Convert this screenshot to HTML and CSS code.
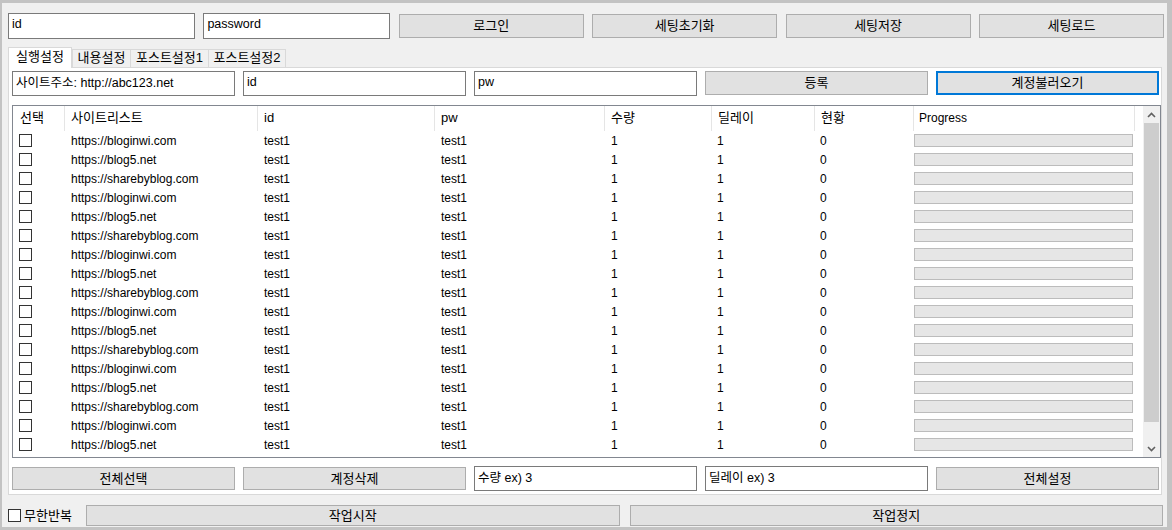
FILE: index.html
```html
<!DOCTYPE html>
<html lang="ko">
<head>
    <meta charset="UTF-8">
    <meta name="viewport" content="width=device-width, initial-scale=1.0">
    <title>블로그 자동 포스팅</title>
    <link rel="stylesheet" href="styles.css">
</head>
<body>
    <div class="window">
        <div class="topbar">
            <input type="text" class="textbox top-field" value="id">
            <input type="text" class="textbox top-field" value="password">
            <button class="btn top-btn">로그인</button>
            <button class="btn top-btn">세팅초기화</button>
            <button class="btn top-btn">세팅저장</button>
            <button class="btn top-btn">세팅로드</button>
        </div>

        <div class="tabs">
            <div class="tab active">실행설정</div>
            <div class="tab">내용설정</div>
            <div class="tab">포스트설정1</div>
            <div class="tab">포스트설정2</div>
        </div>

        <div class="panel">
            <div class="fields">
                <input type="text" class="textbox" value="사이트주소: http://abc123.net">
                <input type="text" class="textbox" value="id">
                <input type="text" class="textbox" value="pw">
                <button class="btn">등록</button>
                <button class="btn focused">계정불러오기</button>
            </div>

            <div class="list">
                <div class="list-main">
                    <div class="list-head">
                        <div class="col">선택</div>
                        <div class="col">사이트리스트</div>
                        <div class="col">id</div>
                        <div class="col">pw</div>
                        <div class="col">수량</div>
                        <div class="col">딜레이</div>
                        <div class="col">현황</div>
                        <div class="col">Progress</div>
                    </div>
                    <div class="list-row"><span class="cell"><input type="checkbox" class="check"></span><span class="cell">https://bloginwi.com</span><span class="cell">test1</span><span class="cell">test1</span><span class="cell">1</span><span class="cell">1</span><span class="cell">0</span><span class="cell bar-cell"><span class="bar"></span></span></div>
                    <div class="list-row"><span class="cell"><input type="checkbox" class="check"></span><span class="cell">https://blog5.net</span><span class="cell">test1</span><span class="cell">test1</span><span class="cell">1</span><span class="cell">1</span><span class="cell">0</span><span class="cell bar-cell"><span class="bar"></span></span></div>
                    <div class="list-row"><span class="cell"><input type="checkbox" class="check"></span><span class="cell">https://sharebyblog.com</span><span class="cell">test1</span><span class="cell">test1</span><span class="cell">1</span><span class="cell">1</span><span class="cell">0</span><span class="cell bar-cell"><span class="bar"></span></span></div>
                    <div class="list-row"><span class="cell"><input type="checkbox" class="check"></span><span class="cell">https://bloginwi.com</span><span class="cell">test1</span><span class="cell">test1</span><span class="cell">1</span><span class="cell">1</span><span class="cell">0</span><span class="cell bar-cell"><span class="bar"></span></span></div>
                    <div class="list-row"><span class="cell"><input type="checkbox" class="check"></span><span class="cell">https://blog5.net</span><span class="cell">test1</span><span class="cell">test1</span><span class="cell">1</span><span class="cell">1</span><span class="cell">0</span><span class="cell bar-cell"><span class="bar"></span></span></div>
                    <div class="list-row"><span class="cell"><input type="checkbox" class="check"></span><span class="cell">https://sharebyblog.com</span><span class="cell">test1</span><span class="cell">test1</span><span class="cell">1</span><span class="cell">1</span><span class="cell">0</span><span class="cell bar-cell"><span class="bar"></span></span></div>
                    <div class="list-row"><span class="cell"><input type="checkbox" class="check"></span><span class="cell">https://bloginwi.com</span><span class="cell">test1</span><span class="cell">test1</span><span class="cell">1</span><span class="cell">1</span><span class="cell">0</span><span class="cell bar-cell"><span class="bar"></span></span></div>
                    <div class="list-row"><span class="cell"><input type="checkbox" class="check"></span><span class="cell">https://blog5.net</span><span class="cell">test1</span><span class="cell">test1</span><span class="cell">1</span><span class="cell">1</span><span class="cell">0</span><span class="cell bar-cell"><span class="bar"></span></span></div>
                    <div class="list-row"><span class="cell"><input type="checkbox" class="check"></span><span class="cell">https://sharebyblog.com</span><span class="cell">test1</span><span class="cell">test1</span><span class="cell">1</span><span class="cell">1</span><span class="cell">0</span><span class="cell bar-cell"><span class="bar"></span></span></div>
                    <div class="list-row"><span class="cell"><input type="checkbox" class="check"></span><span class="cell">https://bloginwi.com</span><span class="cell">test1</span><span class="cell">test1</span><span class="cell">1</span><span class="cell">1</span><span class="cell">0</span><span class="cell bar-cell"><span class="bar"></span></span></div>
                    <div class="list-row"><span class="cell"><input type="checkbox" class="check"></span><span class="cell">https://blog5.net</span><span class="cell">test1</span><span class="cell">test1</span><span class="cell">1</span><span class="cell">1</span><span class="cell">0</span><span class="cell bar-cell"><span class="bar"></span></span></div>
                    <div class="list-row"><span class="cell"><input type="checkbox" class="check"></span><span class="cell">https://sharebyblog.com</span><span class="cell">test1</span><span class="cell">test1</span><span class="cell">1</span><span class="cell">1</span><span class="cell">0</span><span class="cell bar-cell"><span class="bar"></span></span></div>
                    <div class="list-row"><span class="cell"><input type="checkbox" class="check"></span><span class="cell">https://bloginwi.com</span><span class="cell">test1</span><span class="cell">test1</span><span class="cell">1</span><span class="cell">1</span><span class="cell">0</span><span class="cell bar-cell"><span class="bar"></span></span></div>
                    <div class="list-row"><span class="cell"><input type="checkbox" class="check"></span><span class="cell">https://blog5.net</span><span class="cell">test1</span><span class="cell">test1</span><span class="cell">1</span><span class="cell">1</span><span class="cell">0</span><span class="cell bar-cell"><span class="bar"></span></span></div>
                    <div class="list-row"><span class="cell"><input type="checkbox" class="check"></span><span class="cell">https://sharebyblog.com</span><span class="cell">test1</span><span class="cell">test1</span><span class="cell">1</span><span class="cell">1</span><span class="cell">0</span><span class="cell bar-cell"><span class="bar"></span></span></div>
                    <div class="list-row"><span class="cell"><input type="checkbox" class="check"></span><span class="cell">https://bloginwi.com</span><span class="cell">test1</span><span class="cell">test1</span><span class="cell">1</span><span class="cell">1</span><span class="cell">0</span><span class="cell bar-cell"><span class="bar"></span></span></div>
                    <div class="list-row"><span class="cell"><input type="checkbox" class="check"></span><span class="cell">https://blog5.net</span><span class="cell">test1</span><span class="cell">test1</span><span class="cell">1</span><span class="cell">1</span><span class="cell">0</span><span class="cell bar-cell"><span class="bar"></span></span></div>
                </div>
                <div class="vscroll">
                    <div class="arrow">
                        <svg width="9" height="6" viewBox="0 0 9 6"><polyline points="1,5 4.5,1.5 8,5" fill="none" stroke="#606060" stroke-width="1.6"/></svg>
                    </div>
                    <div class="track"><div class="thumb"></div></div>
                    <div class="arrow">
                        <svg width="9" height="6" viewBox="0 0 9 6"><polyline points="1,1 4.5,4.5 8,1" fill="none" stroke="#606060" stroke-width="1.6"/></svg>
                    </div>
                </div>
            </div>

            <div class="fields bottom-fields">
                <button class="btn">전체선택</button>
                <button class="btn">계정삭제</button>
                <input type="text" class="textbox" value="수량 ex) 3">
                <input type="text" class="textbox" value="딜레이 ex) 3">
                <button class="btn">전체설정</button>
            </div>
        </div>

        <div class="runbar">
            <label class="loop"><input type="checkbox" class="check">무한반복</label>
            <button class="btn run-btn">작업시작</button>
            <button class="btn run-btn">작업정지</button>
        </div>
    </div>
</body>
</html>
```

FILE: styles.css
```css
* {
    box-sizing: border-box;
}
body {
    margin: 0;
    font-family: "Liberation Sans", "Noto Sans CJK KR", sans-serif;
    font-size: 12px;
    color: #000;
    background: #c3c3c3;
}
.window {
    width: 1172px;
    height: 530px;
    border-style: solid;
    border-color: #c3c3c3;
    border-width: 3px 5px 3px 2px;
    background: #f0f0f0;
    padding: 10px 3px 1px 6px;
    display: flex;
    flex-direction: column;
}
.textbox {
    font: inherit;
    font-size: 12.5px;
    color: #000;
    background: #fff;
    border: 1px solid #7a7a7a;
    border-radius: 0;
    padding: 0 3px 4px;
    margin: 0;
    outline: none;
    line-height: 16px;
}
.btn {
    font: inherit;
    font-size: 13px;
    color: #000;
    background: #e1e1e1;
    border: 1px solid #adadad;
    border-radius: 0;
    padding: 0;
    margin: 0;
    line-height: 16px;
}
.btn.focused {
    border: 2px solid #0078d7;
}
.topbar {
    display: flex;
    justify-content: space-between;
    align-items: center;
    height: 26px;
}
.top-field {
    width: 187px;
    height: 26px;
}
.top-btn {
    width: 185px;
    height: 24px;
}

/* 탭 */
.tabs {
    display: flex;
    align-items: flex-end;
    height: 20px;
    margin-top: 8px;
    font-size: 13px;
}
.tab {
    height: 18px;
    line-height: 16px;
    text-align: center;
    border: 1px solid #d9d9d9;
    border-bottom: none;
    background: #f0f0f0;
    margin-left: -1px;
}
.tab:nth-child(2) { width: 59px; margin-left: 0; }
.tab:nth-child(3) { width: 79px; }
.tab:nth-child(4) { width: 78px; }
.tab.active {
    position: relative;
    width: 64px;
    height: 21px;
    margin-left: 0;
    margin-bottom: -1px;
    background: #fff;
    padding-top: 1px;
}
.panel {
    height: 428px;
    margin-right: 2px;
    background: #fff;
    border: 1px solid #d9d9d9;
    padding: 3px 0 3px 3px;
    display: flex;
    flex-direction: column;
}
.fields {
    display: grid;
    grid-template-columns: repeat(5, 1fr);
    column-gap: 8px;
    width: 1147px;
    height: 25px;
    align-items: start;
}
.fields .textbox {
    height: 25px;
    width: 100%;
}
.fields .btn {
    height: 24px;
}
.bottom-fields {
    margin-top: 8px;
    align-items: center;
}
.bottom-fields .btn {
    height: 23px;
}

/* 리스트뷰 */
.list {
    display: flex;
    width: 1149px;
    height: 353px;
    margin-top: 9px;
    border: 1px solid #828790;
}
.list-main {
    flex: 1;
}
.list-head,
.list-row {
    display: grid;
    grid-template-columns: 52px 193px 177px 170px 107px 103px 99px 221px;
}
.list-head {
    height: 25px;
    font-size: 13px;
}
.col {
    border-right: 1px solid #e5e5e5;
    padding: 4px 0 0 6px;
    line-height: 16px;
    white-space: nowrap;
}
.col:first-child {
    padding-left: 7px;
}
.col:last-child {
    font-size: 12px;
    padding-left: 5px;
}
.list-row {
    height: 19px;
    align-items: center;
}
.cell {
    padding-left: 6px;
    line-height: 16px;
    white-space: nowrap;
}
.cell:nth-child(n+6) {
    padding-left: 5px;
}
.check {
    appearance: none;
    -webkit-appearance: none;
    display: block;
    width: 13px;
    height: 13px;
    margin: 0;
    border: 1px solid #333;
    background: #fff;
}
.cell.bar-cell {
    padding-left: 0;
}
.bar {
    display: block;
    width: 219px;
    height: 13px;
    background: #e6e6e6;
    border: 1px solid #bcbcbc;
}
.vscroll {
    width: 17px;
    display: flex;
    flex-direction: column;
    background: #f0f0f0;
}
.arrow {
    height: 17px;
    display: flex;
    align-items: center;
    justify-content: center;
}
.track {
    flex: 1;
}
.thumb {
    height: 299px;
    margin: 0 1px;
    background: #cdcdcd;
}

/* 하단 실행 */
.runbar {
    display: flex;
    align-items: center;
    gap: 10px;
    height: 21px;
    margin-top: 10px;
    margin-right: 1px;
}
.loop {
    display: flex;
    align-items: center;
    gap: 3px;
    width: 68px;
    font-size: 13px;
    line-height: 16px;
}
.run-btn {
    flex: 1;
    height: 21px;
}
```
